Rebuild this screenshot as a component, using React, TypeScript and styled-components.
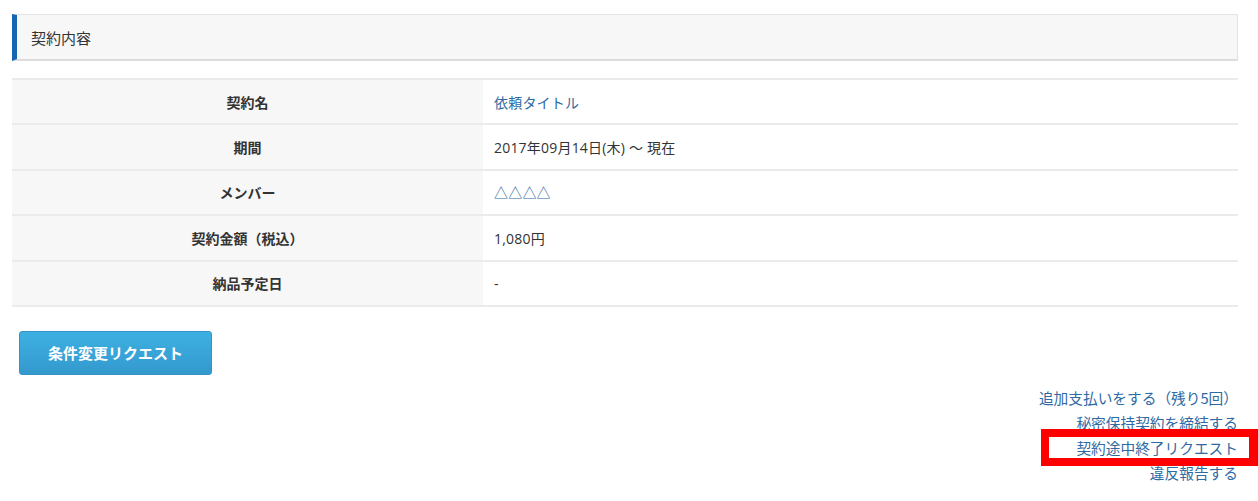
import React from "react";
import styled, { createGlobalStyle } from "styled-components";

const GlobalStyle = createGlobalStyle`
    body {
        margin: 0;
        background: #fff;
        font-family: "Noto Sans CJK JP", "Noto Sans", sans-serif;
        color: #333;
        overflow: hidden;
    }
`;

const rows = [
    { label: "契約名", value: "依頼タイトル", link: true },
    { label: "期間", value: "2017年09月14日(木) ～ 現在" },
    { label: "メンバー", value: "△△△△", link: true },
    { label: "契約金額（税込）", value: "1,080円" },
    { label: "納品予定日", value: "-" },
];

const actions = [
    { text: "追加支払いをする（残り5回）" },
    { text: "秘密保持契約を締結する" },
    { text: "契約途中終了リクエスト", marked: true },
    { text: "違反報告する" },
];

const Page = styled.div`
    width: 1226px;
    padding: 14px 0 0 12px;
`;

const Heading = styled.div`
    height: 44px;
    display: flex;
    align-items: center;
    padding-left: 14px;
    background: #f7f7f7;
    border: 1px solid #e4e4e4;
    border-bottom: 2px solid #dcdcdc;
    border-left: 5px solid #1565b0;
    font-size: 15px;
    color: #333;
`;

const Table = styled.div`
    margin-top: 17px;
    border-top: 2px solid #ebebeb;
    display: grid;
    grid-template-columns: 471px 1fr;
`;

const Label = styled.div`
    height: 43.4px;
    display: flex;
    align-items: center;
    justify-content: center;
    background: #f7f7f7;
    border-bottom: 2px solid #ebebeb;
    font-size: 14px;
    font-weight: bold;
    color: #333;
`;

const Value = styled.div<{ $link?: boolean }>`
    height: 43.4px;
    display: flex;
    align-items: center;
    padding-left: 11px;
    background: #fff;
    border-bottom: 2px solid #ebebeb;
    font-family: "Open Sans", "Noto Sans CJK JP", sans-serif;
    font-size: 14px;
    letter-spacing: 0.2px;
    color: ${p => (p.$link ? "#2f6aa3" : "#333")};
`;

const Button = styled.button`
    margin: 24px 0 0 7px;
    width: 193px;
    height: 44px;
    border: 1px solid #3592c4;
    border-radius: 3px;
    background: linear-gradient(#3db0e3, #3499cd);
    color: #fff;
    font-family: inherit;
    font-size: 15px;
    font-weight: bold;
    cursor: pointer;
`;

const Links = styled.div`
    margin-top: 10px;
    display: flex;
    flex-direction: column;
    align-items: flex-end;
`;

const ActionLink = styled.a`
    position: relative;
    display: block;
    line-height: 25px;
    font-size: 14.7px;
    color: #2f6aa3;
    text-decoration: none;
`;

/* red annotation frame laid over the third link */
const Marker = styled.span`
    position: absolute;
    left: -35px;
    right: -20px;
    top: -6px;
    bottom: -6px;
    border: 8px solid #ff0000;
    border-right-width: 9px;
    pointer-events: none;
`;

export default function App() {
    return (
        <>
            <GlobalStyle />
            <Page>
                <Heading>契約内容</Heading>
                <Table>
                    {rows.map(r => (
                        <React.Fragment key={r.label}>
                            <Label>{r.label}</Label>
                            <Value $link={r.link}>{r.value}</Value>
                        </React.Fragment>
                    ))}
                </Table>
                <Button>条件変更リクエスト</Button>
                <Links>
                    {actions.map(a => (
                        <ActionLink key={a.text} href="#">
                            {a.text}
                            {a.marked && <Marker />}
                        </ActionLink>
                    ))}
                </Links>
            </Page>
        </>
    );
}
